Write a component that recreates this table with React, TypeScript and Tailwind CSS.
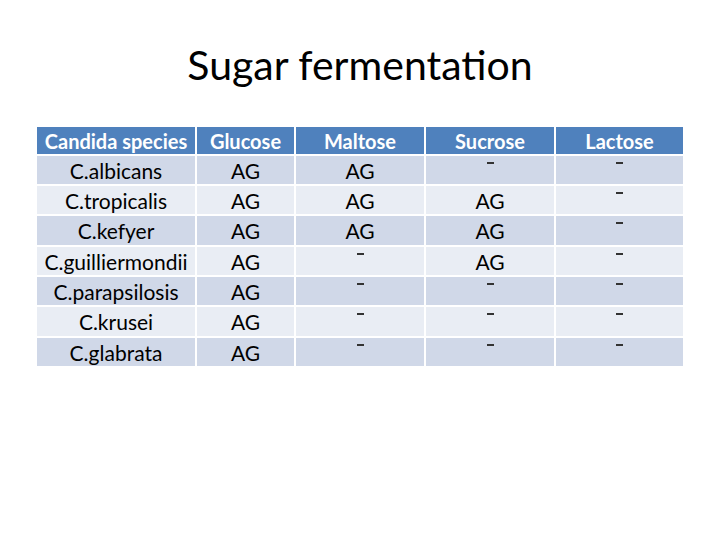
const columns = ['Candida species', 'Glucose', 'Maltose', 'Sucrose', 'Lactose'];

const rows: string[][] = [
    ['C.albicans', 'AG', 'AG', '-', '-'],
    ['C.tropicalis', 'AG', 'AG', 'AG', '-'],
    ['C.kefyer', 'AG', 'AG', 'AG', '-'],
    ['C.guilliermondii', 'AG', '-', 'AG', '-'],
    ['C.parapsilosis', 'AG', '-', '-', '-'],
    ['C.krusei', 'AG', '-', '-', '-'],
    ['C.glabrata', 'AG', '-', '-', '-'],
];

// row heights in px, so the table ends where the slide's does
const heights = ['h-[28px]', 'h-[28px]', 'h-[29px]', 'h-[28px]', 'h-[28px]', 'h-[29px]', 'h-[28px]'];

function Cell({ value, shade, height }: { value: string; shade: string; height: string }) {
    if (value === '-') {
        // the dash sits high in the cell, like in the slide
        return (
            <div className={`flex justify-center ${height} ${shade}`}>
                <span className="mt-[6px] block h-[2px] w-[7px] bg-[#333]" />
            </div>
        );
    }
    return (
        <div className={`flex items-center justify-center text-[21px] leading-none text-black ${height} ${shade}`}>
            {value}
        </div>
    );
}

export default function App() {
    return (
        <div className="h-[540px] w-[720px] bg-white" style={{ fontFamily: 'Lato, "Open Sans", sans-serif' }}>
            <h1 className="pt-[44px] text-center text-[41px] leading-none text-black">Sugar fermentation</h1>

            <div className="ml-[37px] mt-[42px] grid w-[646px] grid-cols-[158px_97px_128px_128px_127px] gap-[2px] bg-white">
                {columns.map((c) => (
                    <div key={c} className="flex h-[27px] items-center justify-center bg-[#4f81bd] text-[20px] font-bold leading-none text-white">
                        {c}
                    </div>
                ))}
                {rows.map((row, i) =>
                    row.map((v, j) => (
                        <Cell
                            key={`${i}-${j}`}
                            value={v}
                            height={heights[i]}
                            shade={i % 2 === 0 ? 'bg-[#d0d8e8]' : 'bg-[#e9edf4]'}
                        />
                    )),
                )}
            </div>
        </div>
    );
}
